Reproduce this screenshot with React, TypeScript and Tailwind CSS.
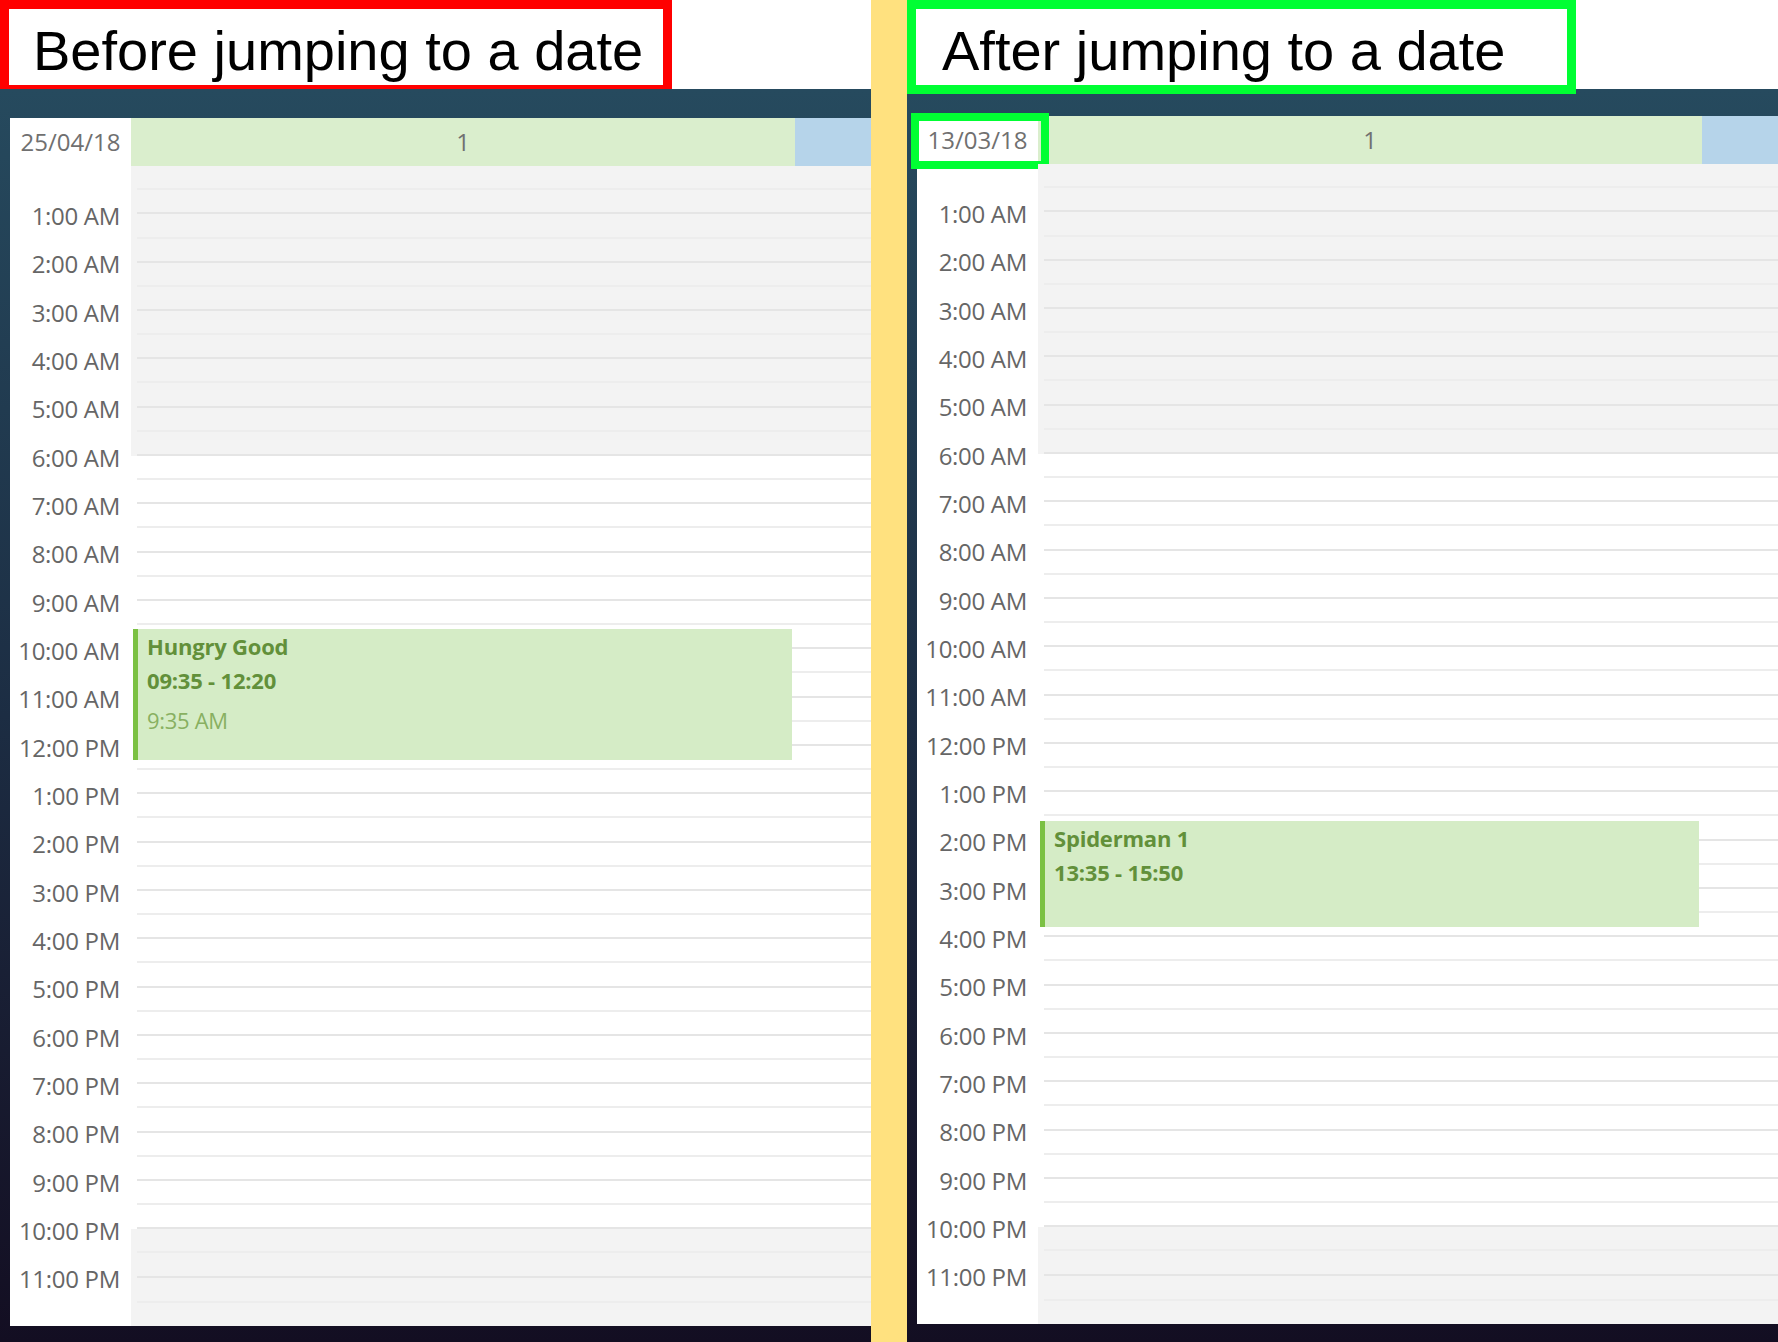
import React from "react";

const HOUR = 1160 / 24;

const LABELS = [
  "1:00 AM", "2:00 AM", "3:00 AM", "4:00 AM", "5:00 AM", "6:00 AM", "7:00 AM", "8:00 AM",
  "9:00 AM", "10:00 AM", "11:00 AM", "12:00 PM", "1:00 PM", "2:00 PM", "3:00 PM", "4:00 PM",
  "5:00 PM", "6:00 PM", "7:00 PM", "8:00 PM", "9:00 PM", "10:00 PM", "11:00 PM",
];

type Ev = { title: string; range: string; note?: string; start: number; end: number };

function Calendar({ date, event, highlight }: { date: string; event: Ev; highlight?: boolean }) {
  return (
    <div className="flex flex-col bg-white">
      <div className="flex h-[48px]">
        <div className="relative flex w-[121px] items-center justify-center text-[24px] text-[#707070]">
          {date}
          {highlight && (
            <div className="absolute left-[-6px] top-[-3px] h-[56px] w-[138px] border-[8px] border-[#00ff33]" />
          )}
        </div>
        <div className="flex w-[664px] items-center justify-center bg-[#daeecd] text-[24px] text-[#707070]">1</div>
        <div className="flex-1 bg-[#b6d4ea]" />
      </div>
      <div className="flex h-[1160px]">
        <div className="flex w-[121px] flex-col bg-white">
          <div className="h-[26px] shrink-0" />
          {LABELS.map((l) => (
            <div key={l} className="flex h-[48.333px] shrink-0 items-center justify-end pr-[11px] text-[24px] leading-none tracking-[-0.3px] text-[#666666]">
              {l}
            </div>
          ))}
        </div>
        <div className="relative flex flex-1 flex-col">
          {Array.from({ length: 24 }).map((_, i) => {
            const gray = i < 6 || i >= 22;
            return (
              <div key={i} className={gray ? "flex flex-1 flex-col bg-[#f3f3f3]" : "flex flex-1 flex-col bg-white"}>
                <div className="ml-[6px] flex-1 border-b-2 border-[#ededed]" />
                <div className={i === 23 ? "ml-[6px] flex-1" : "ml-[6px] flex-1 border-b-2 border-[#e5e5e5]"} />
              </div>
            );
          })}
          <div
            className="absolute left-[2px] w-[659px] border-l-[5px] border-[#7bc143] bg-[#d5ecc6] pl-[9px]"
            style={{ top: event.start * HOUR, height: (event.end - event.start) * HOUR - 2 }}
          >
            <div className="text-[22px] font-bold leading-[34px] tracking-[-0.2px] text-[#62903a]">{event.title}</div>
            <div className="text-[22px] font-bold leading-[34px] tracking-[-0.2px] text-[#62903a]">{event.range}</div>
            {event.note && <div className="mt-[6px] text-[22px] leading-[34px] tracking-[-0.3px] text-[#88b061]">{event.note}</div>}
          </div>
        </div>
      </div>
    </div>
  );
}

export default function App() {
  return (
    <div className="flex h-[1342px] w-[1778px] overflow-hidden bg-white font-['Open_Sans',sans-serif]">
      <div className="flex w-[871px] flex-col">
        <div className="h-[89px] overflow-hidden">
          <div className="h-[94px] w-[672px] border-[9px] border-[#ff0000] bg-white pl-[24px] pt-[10px] font-['Liberation_Sans',Arial,sans-serif] text-[56px] leading-[64px] text-black">
            Before jumping to a date
          </div>
        </div>
        <div className="flex-1 bg-linear-to-b from-[#264a5e] via-[#1c2d43] to-[#130e22] pb-[16px] pl-[10px] pt-[29px]">
          <Calendar
            date="25/04/18"
            event={{ title: "Hungry Good", range: "09:35 - 12:20", note: "9:35 AM", start: 9 + 35 / 60, end: 12 + 20 / 60 }}
          />
        </div>
      </div>
      <div className="w-[36px] bg-[#ffe17f]" />
      <div className="flex flex-1 flex-col">
        <div className="relative z-10 h-[89px]">
          <div className="h-[94px] w-[669px] border-[9px] border-[#00ff33] bg-white pl-[26px] pt-[10px] font-['Liberation_Sans',Arial,sans-serif] text-[56px] leading-[64px] text-black">
            After jumping to a date
          </div>
        </div>
        <div className="flex-1 bg-linear-to-b from-[#264a5e] via-[#1c2d43] to-[#130e22] pb-[18px] pl-[10px] pt-[27px]">
          <Calendar
            highlight
            date="13/03/18"
            event={{ title: "Spiderman 1", range: "13:35 - 15:50", start: 13 + 35 / 60, end: 15 + 50 / 60 }}
          />
        </div>
      </div>
    </div>
  );
}
